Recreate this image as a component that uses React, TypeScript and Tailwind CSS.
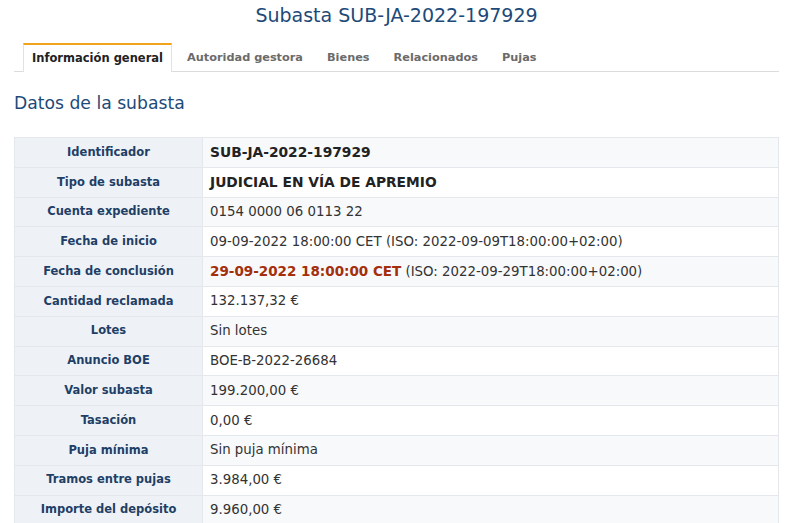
const tabs = ["Información general", "Autoridad gestora", "Bienes", "Relacionados", "Pujas"];

type Row = { label: string; value: React.ReactNode };

const rows: Row[] = [
  { label: "Identificador", value: <strong className="text-[13.8px] text-[#222]">SUB-JA-2022-197929</strong> },
  { label: "Tipo de subasta", value: <strong className="text-[13.8px] text-[#222]">JUDICIAL EN VÍA DE APREMIO</strong> },
  { label: "Cuenta expediente", value: "0154 0000 06 0113 22" },
  { label: "Fecha de inicio", value: "09-09-2022 18:00:00 CET (ISO: 2022-09-09T18:00:00+02:00)" },
  {
    label: "Fecha de conclusión",
    value: (
      <>
        <strong className="text-[13.5px] text-[#a3300b]">29-09-2022 18:00:00 CET</strong> (ISO: 2022-09-29T18:00:00+02:00)
      </>
    ),
  },
  { label: "Cantidad reclamada", value: "132.137,32 €" },
  { label: "Lotes", value: "Sin lotes" },
  { label: "Anuncio BOE", value: "BOE-B-2022-26684" },
  { label: "Valor subasta", value: "199.200,00 €" },
  { label: "Tasación", value: "0,00 €" },
  { label: "Puja mínima", value: "Sin puja mínima" },
  { label: "Tramos entre pujas", value: "3.984,00 €" },
  { label: "Importe del depósito", value: "9.960,00 €" },
];

export default function App() {
  return (
    <div className="min-h-screen bg-white px-[14px] pr-[13px] font-['DejaVu_Sans',Verdana,sans-serif] text-[13.33px] text-[#333]">
      <h1 className="pt-[3px] text-center text-[19px] leading-[24px] text-[#1d4a78]">Subasta SUB-JA-2022-197929</h1>

      <ul className="mt-[16px] flex border-b border-[#dcdcdc] pl-[9px] text-[11.5px]">
        {tabs.map((t, i) => (
          <li
            key={t}
            className={
              i === 0
                ? "-mb-px border-x border-t-2 border-[#e2e2e2] border-t-[#f2a31c] bg-white px-[8px] pb-[4px] pt-[5px] font-bold text-[#222]"
                : "ml-[6px] px-[9px] pb-[4px] pt-[7px] text-[11.3px] font-bold text-[#6b6b6b]"
            }
          >
            {t}
          </li>
        ))}
      </ul>

      <h2 className="mt-[20px] text-[17.2px] leading-[22px] text-[#1d4a78]">Datos de la subasta</h2>

      <table className="mt-[23px] w-full border-collapse">
        <tbody>
          {rows.map((r, i) => (
            <tr key={r.label} className={i % 2 === 0 ? "bg-[#f8f9fb]" : "bg-white"}>
              <th className="h-[29.8px] w-[188px] border border-[#e4e7eb] bg-[#eef2f6] text-center text-[11.5px] font-bold text-[#1f3f66]">
                {r.label}
              </th>
              <td className="h-[29.8px] border border-[#e4e7eb] px-[7px]">{r.value}</td>
            </tr>
          ))}
        </tbody>
      </table>
    </div>
  );
}
